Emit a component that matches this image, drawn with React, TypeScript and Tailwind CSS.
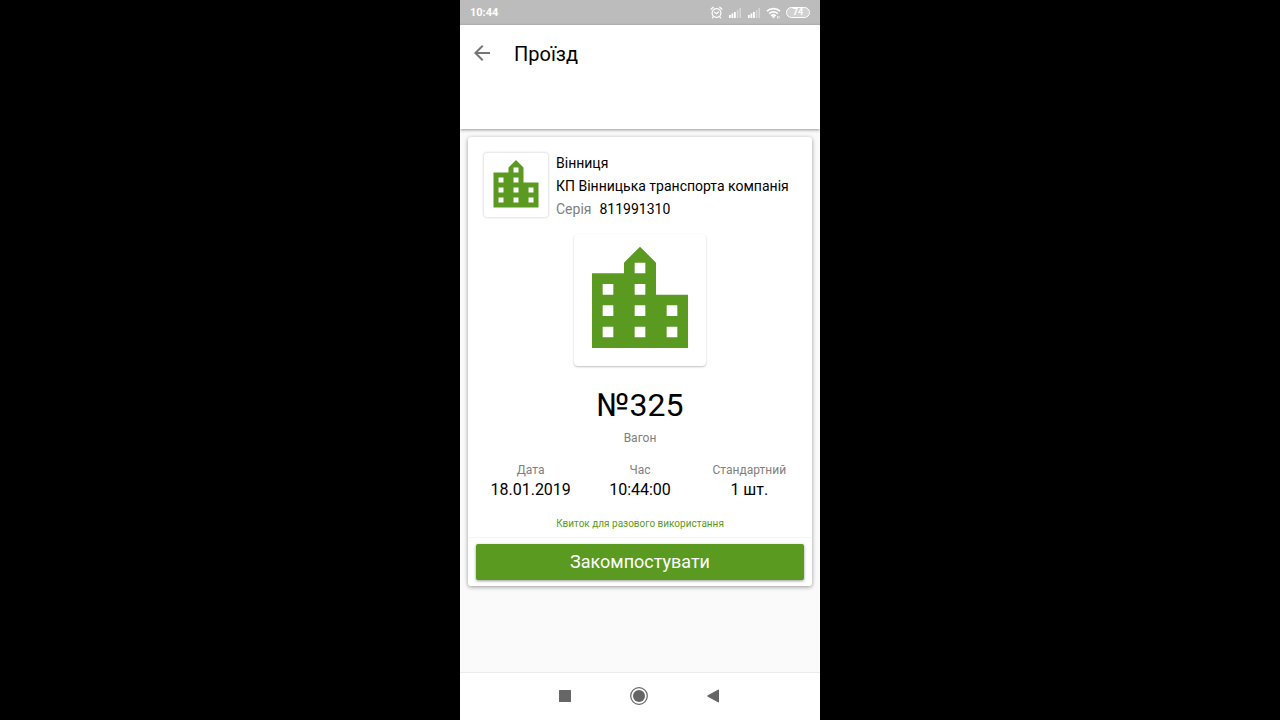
import { MdArrowBack, MdLocationCity } from "react-icons/md";

const details = [
  { label: "Дата", value: "18.01.2019" },
  { label: "Час", value: "10:44:00" },
  { label: "Стандартний", value: "1 шт." },
];

const Signal = () => (
  <svg width="14" height="12" viewBox="0 0 14 12" fill="#fff">
    <path d="M1 8h1.8v3H1zM3.5 6.6h1.8V11H3.500zM6 5h1.800v6H6z" />
    <path d="M8.8 3h1.6v8H8.8zM11.4 1H13v10h-1.6z" opacity="0.4" />
  </svg>
);

const StatusBar = () => (
  <div className="flex h-[25px] shrink-0 items-center justify-between bg-[#bcbcbc] px-[10px] text-white">
    <span className="text-[11px] font-bold leading-4">10:44</span>
    <div className="flex items-center gap-[5px]">
      <svg
        width="13"
        height="13"
        viewBox="0 0 13 13"
        fill="none"
        stroke="#fff"
        strokeWidth="1.2"
        strokeLinecap="round"
      >
        <circle cx="6.5" cy="7" r="4.4" />
        <path d="M1 3.2 3.2 1.2M12 3.2 9.8 1.2M4.6 6.2l1.9 1.5 2-1.7M3.4 10.6l-1 1.2M9.6 10.6l1 1.2" />
      </svg>
      <Signal />
      <Signal />
      <svg width="15" height="12" viewBox="0 0 15 12" fill="none">
        <path
          d="M1 4.2c3.6-3.4 9.4-3.4 13 0M3.2 6.6c2.4-2.2 6.2-2.2 8.6 0M5.2 8.8c1.3-1.1 3.3-1.1 4.6 0"
          stroke="#fff"
          strokeWidth="1.7"
        />
        <path d="m5.8 9.6 1.7 1.9 1.7-1.9c-1-.8-2.4-.8-3.4 0z" fill="#fff" />
        <path d="M11 9h1v2.5h-1zM12.6 9h1v2.5h-1z" fill="#fff" opacity="0.7" />
      </svg>
      <span className="flex h-[11px] w-6 items-center justify-center rounded-full border border-white bg-white/30 text-[9px] font-bold leading-none">
        74
      </span>
    </div>
  </div>
);

const NavBar = () => (
  <nav className="flex h-12 shrink-0 items-center justify-center gap-[50px] border-t border-[#ededed] bg-white pb-[2px] pr-[2px]">
    <button aria-label="Recent" className="flex w-6 justify-center">
      <svg width="12" height="12" viewBox="0 0 12 12">
        <rect width="12" height="12" rx="0.5" fill="#666" />
      </svg>
    </button>
    <button aria-label="Home" className="flex w-6 justify-center">
      <svg width="18" height="18" viewBox="0 0 18 18">
        <circle cx="9" cy="9" r="8.3" fill="none" stroke="#666" strokeWidth="1.2" />
        <circle cx="9" cy="9" r="6" fill="#666" />
      </svg>
    </button>
    <button aria-label="Back" className="flex w-6 justify-center">
      <svg width="12" height="14" viewBox="0 0 12 14">
        <path d="M11.5.9v12.2L.5 7z" fill="#666" stroke="#666" strokeLinejoin="round" />
      </svg>
    </button>
  </nav>
);

const App = () => {
  return (
    <div className="flex min-h-screen justify-center bg-black font-['Roboto',sans-serif] text-black">
      <div className="flex w-full max-w-[360px] flex-col bg-[#fafafa]">
        <StatusBar />
        <header className="flex h-[104px] shrink-0 items-start gap-5 bg-white px-[10px] pt-4 shadow-[0_1px_3px_rgba(0,0,0,0.4)]">
          <button aria-label="Назад" className="flex h-6 w-6 items-center justify-center text-[#757575]">
            <MdArrowBack size={24} />
          </button>
          <h1 className="text-xl leading-[26px]">Проїзд</h1>
        </header>

        <main className="flex-1 px-2 pt-2">
          <section className="flex flex-col rounded-[3px] bg-white pb-[6px] pt-4 shadow-[0_1px_4px_rgba(0,0,0,0.4)]">
            <div className="flex items-start gap-2 px-4">
              <div className="shrink-0 rounded-[3px] p-[2px] text-[#5a9a20] shadow-[0_0_3px_rgba(0,0,0,0.25)]">
                <MdLocationCity size={60} />
              </div>
              <div className="flex flex-col gap-[3px] text-sm leading-5">
                <p>Вінниця</p>
                <p>КП Вінницька транспорта компанія</p>
                <p>
                  <span className="mr-2 text-[#808080]">Серія</span>
                  811991310
                </p>
              </div>
            </div>

            <div className="mt-[15px] self-center rounded-[4px] p-[2px] text-[#5a9a20] shadow-[0_1px_2px_rgba(0,0,0,0.25)]">
              <MdLocationCity size={128} />
            </div>

            <p className="mt-[19px] text-center text-[32px] leading-10">№325</p>
            <p className="mt-[5px] text-center text-xs leading-4 text-[#808080]">Вагон</p>

            <dl className="mt-4 grid grid-cols-3 px-2 text-center">
              {details.map((item) => (
                <div key={item.label}>
                  <dt className="text-xs leading-4 text-[#808080]">{item.label}</dt>
                  <dd className="text-base leading-6">{item.value}</dd>
                </div>
              ))}
            </dl>

            <p className="mt-[15px] text-center text-[10px] leading-[14px] text-[#5a9a20]">
              Квиток для разового використання
            </p>
            <div className="mt-[6px] border-t border-[#f5f5f5] px-2 pt-[6px]">
              <button className="h-9 w-full rounded-[2px] bg-[#5a9a20] text-lg text-white shadow-[0_1px_3px_rgba(0,0,0,0.4)]">
                Закомпостувати
              </button>
            </div>
          </section>
        </main>
        <NavBar />
      </div>
    </div>
  );
};

export default App;
